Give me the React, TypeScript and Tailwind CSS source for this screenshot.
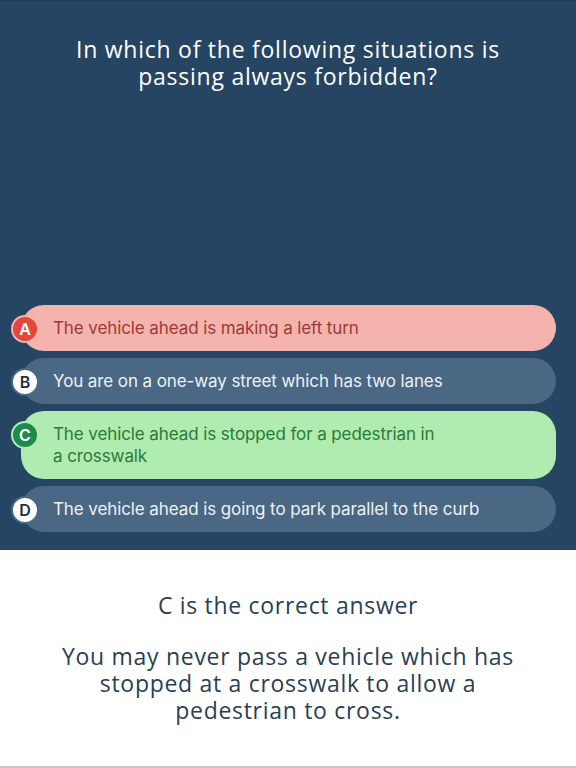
const answers = [
  {
    letter: "A",
    text: "The vehicle ahead is making a left turn",
    card: "bg-[#f4b3ad] text-[#9a3b37]",
    badge: "bg-[#e2463e] text-white border-[#f4b3ad]",
  },
  {
    letter: "B",
    text: "You are on a one-way street which has two lanes",
    card: "bg-[#4a6784] text-[#eef2f6]",
    badge: "bg-white text-[#1f2f40] border-[#4a6784]",
  },
  {
    letter: "C",
    text: "The vehicle ahead is stopped for a pedestrian in\na crosswalk",
    card: "bg-[#b0ebb0] text-[#2b7a38]",
    badge: "bg-[#1f8a4f] text-white border-[#b0ebb0]",
  },
  {
    letter: "D",
    text: "The vehicle ahead is going to park parallel to the curb",
    card: "bg-[#4a6784] text-[#eef2f6]",
    badge: "bg-white text-[#1f2f40] border-[#4a6784]",
  },
];

function AnswerCard({ a }: { a: (typeof answers)[number] }) {
  return (
    <div className={`relative ml-[21px] mr-[20px] rounded-[23px] py-[12px] pl-[32px] pr-4 ${a.card}`}>
      <div
        className={`absolute -left-[10px] top-[10px] w-[28px] h-[28px] rounded-full border-[2px] flex items-center justify-center text-[16px] font-semibold ${a.badge}`}
      >
        {a.letter}
      </div>
      <p className="whitespace-pre-line text-[17px] leading-[22px] tracking-[-0.1px]">{a.text}</p>
    </div>
  );
}

const heading = { fontFamily: "'Open Sans', Lato, sans-serif" };

export default function App() {
  return (
    <div className="w-[576px] h-[768px] overflow-hidden">
      {/* Question + answers */}
      <div
        className="h-[550px] bg-[#264562] border-t border-[#1e3a55] flex flex-col"
        style={{ fontFamily: "Inter, 'Noto Sans', sans-serif" }}
      >
        <h1
          className="pt-[35px] text-center text-white text-[23px] leading-[27px] tracking-[0.75px] font-medium"
          style={heading}
        >
          In which of the following situations is
          <br />
          passing always forbidden?
        </h1>

        <div className="mt-auto pb-[18px] flex flex-col gap-[7px]">
          {answers.map((a) => (
            <AnswerCard key={a.letter} a={a} />
          ))}
        </div>
      </div>

      {/* Explanation */}
      <div
        className="h-[218px] bg-white border-b-2 border-[#c9c9c9] flex flex-col items-center text-[#2a3f55] font-medium"
        style={heading}
      >
        <p className="mt-[41px] text-[23px] leading-[28px] tracking-[0.7px]">C is the correct answer</p>
        <p className="mt-[24px] text-center text-[23px] leading-[27px] tracking-[0.7px]">
          You may never pass a vehicle which has
          <br />
          stopped at a crosswalk to allow a
          <br />
          pedestrian to cross.
        </p>
      </div>
    </div>
  );
}
